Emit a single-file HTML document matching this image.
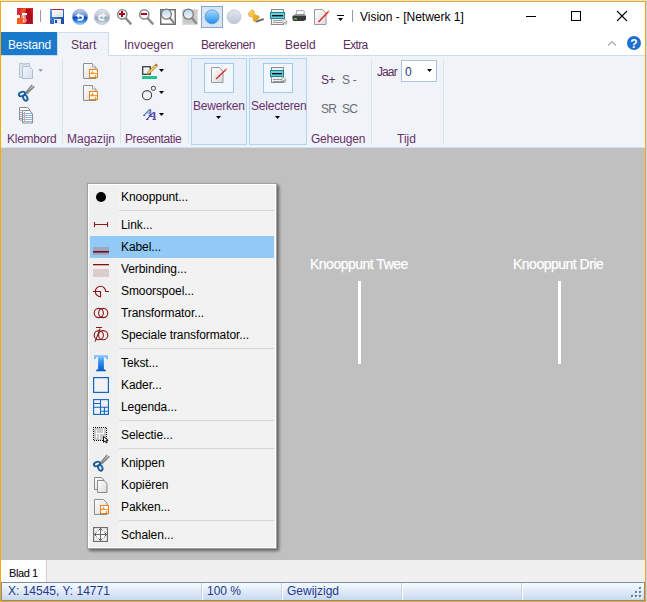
<!DOCTYPE html>
<html><head><meta charset="utf-8">
<style>
*{margin:0;padding:0;box-sizing:border-box}
html,body{width:647px;height:602px;overflow:hidden;background:#fff}
body{position:relative;font-family:"Liberation Sans",sans-serif;font-size:12px;color:#000}
.a{position:absolute}
.t{position:absolute;white-space:nowrap;line-height:12px}
.tab{color:#5e2d5e}
.grp{color:#6a3068}
.sep{position:absolute;width:1px;background:#dde3ea}
.mi{position:absolute;left:121px;white-space:nowrap;line-height:12px;color:#000;letter-spacing:-0.08px}
.ms{position:absolute;left:119px;width:155px;height:1px;background:#d7d7d7}
svg{position:absolute;left:0;top:0}
</style></head><body>
<!-- frame -->
<div class="a" style="left:0;top:0;width:647px;height:1px;background:#dbe3f0"></div>
<div class="a" style="left:646px;top:0;width:1px;height:602px;background:#ccd4e3"></div>
<div class="a" style="left:1px;top:32px;width:644px;height:23px;background:#fff"></div>
<div class="a" style="left:1px;top:55px;width:644px;height:93px;background:#f0f4f9;border-top:1px solid #cfdcec"></div>
<div class="a" style="left:1px;top:147px;width:644px;height:1px;background:#d3e1f2"></div>
<div class="a" style="left:1px;top:148px;width:644px;height:412px;background:#c0c0c0"></div>
<div class="a" style="left:1px;top:560px;width:644px;height:22px;background:#f0f0f0"></div>
<div class="a" style="left:1px;top:582px;width:644px;height:19px;background:linear-gradient(#f8fbff,#c7d9f0);border:1px solid #7890b0"></div>
<div class="a" style="left:0;top:1px;width:1px;height:601px;background:#f7ab00"></div>
<div class="a" style="left:0;top:1px;width:646px;height:1px;background:#f7ab00"></div>
<div class="a" style="left:645px;top:1px;width:1px;height:601px;background:#f7ab00"></div>
<div class="a" style="left:0;top:601px;width:646px;height:1px;background:#f7ab00"></div>

<!-- title -->
<div class="t" style="left:360px;top:11px;color:#000">Vision - [Netwerk 1]</div>

<!-- tabs -->
<div class="a" style="left:1px;top:32px;width:56px;height:23px;background:#1979ca"></div>
<div class="t" style="left:8px;top:39px;color:#fff;letter-spacing:-0.15px">Bestand</div>
<div class="a" style="left:57px;top:32px;width:52px;height:24px;background:#f0f4f9;border:1px solid #cfdcec;border-bottom:none"></div>
<div class="t tab" style="left:71px;top:39px">Start</div>
<div class="t tab" style="left:124px;top:39px">Invoegen</div>
<div class="t tab" style="left:201px;top:39px;letter-spacing:-0.45px">Berekenen</div>
<div class="t tab" style="left:285px;top:39px">Beeld</div>
<div class="t tab" style="left:343px;top:39px;letter-spacing:-0.7px">Extra</div>

<!-- ribbon big buttons -->
<div class="a" style="left:191px;top:58px;width:56px;height:87px;background:#e9f0fa;border:1px solid #acd5f8"></div>
<div class="a" style="left:249px;top:58px;width:58px;height:87px;background:#e9f0fa;border:1px solid #acd5f8"></div>
<div class="a" style="left:204px;top:63px;width:30px;height:30px;background:#f2f7fd;border:1px solid #9ccbf5"></div>
<div class="a" style="left:263px;top:63px;width:30px;height:30px;background:#f2f7fd;border:1px solid #9ccbf5"></div>
<div class="t grp" style="left:193px;top:100px;letter-spacing:-0.2px">Bewerken</div>
<div class="t grp" style="left:251px;top:100px;letter-spacing:-0.2px">Selecteren</div>

<!-- geheugen / tijd -->
<div class="t" style="left:321px;top:74px;color:#5e2d5e;letter-spacing:-0.6px">S+</div>
<div class="t" style="left:342px;top:74px;color:#6d6d6d;letter-spacing:-0.3px">S -</div>
<div class="t" style="left:321px;top:103px;color:#6d6d6d;letter-spacing:-0.8px">SR</div>
<div class="t" style="left:342px;top:103px;color:#6d6d6d;letter-spacing:-0.8px">SC</div>
<div class="t" style="left:377px;top:66px;color:#5e2d5e;letter-spacing:-0.9px">Jaar</div>
<div class="a" style="left:401px;top:60px;width:36px;height:22px;background:#fff;border:1px solid #a8c4e6"></div>
<div class="t" style="left:405px;top:66px;color:#1e3a8e;letter-spacing:-0.5px">0</div>

<!-- group labels -->
<div class="t grp" style="left:7px;top:133px;letter-spacing:-0.25px">Klembord</div>
<div class="t grp" style="left:67px;top:133px">Magazijn</div>
<div class="t grp" style="left:125px;top:133px;letter-spacing:-0.4px">Presentatie</div>
<div class="t grp" style="left:311px;top:133px;letter-spacing:-0.25px">Geheugen</div>
<div class="t grp" style="left:397px;top:133px">Tijd</div>
<div class="sep" style="left:62px;top:59px;height:85px"></div>
<div class="sep" style="left:120px;top:59px;height:85px"></div>
<div class="sep" style="left:188px;top:59px;height:85px"></div>
<div class="sep" style="left:371px;top:59px;height:85px"></div>
<div class="sep" style="left:443px;top:59px;height:85px"></div>

<!-- canvas labels -->
<div class="t" style="left:310px;top:258px;color:#fff;font-size:14px;letter-spacing:-0.5px;-webkit-text-stroke:0.25px #fff">Knooppunt Twee</div>
<div class="t" style="left:513px;top:258px;color:#fff;font-size:14px;letter-spacing:-0.5px;-webkit-text-stroke:0.25px #fff">Knooppunt Drie</div>
<div class="a" style="left:358px;top:281px;width:3px;height:83px;background:#fff"></div>
<div class="a" style="left:558px;top:281px;width:3px;height:83px;background:#fff"></div>

<!-- context menu -->
<div class="a" style="left:87px;top:183px;width:190px;height:366px;background:#f0f0f0;border:1px solid #a0a0a0;box-shadow:inset 1px 1px #fff,inset -1px -1px #fff,2px 2px 3px rgba(0,0,0,.5)"></div>
<div class="a" style="left:118px;top:185px;width:157px;height:362px;background:#f2f2f2"></div>
<div class="a" style="left:90px;top:236px;width:184px;height:22px;background:#91c9f7"></div>
<div class="mi" style="top:191px">Knooppunt...</div>
<div class="ms" style="top:210px"></div>
<div class="mi" style="top:219px">Link...</div>
<div class="mi" style="top:241px">Kabel...</div>
<div class="mi" style="top:263px">Verbinding...</div>
<div class="mi" style="top:285px">Smoorspoel...</div>
<div class="mi" style="top:307px">Transformator...</div>
<div class="mi" style="top:329px">Speciale transformator...</div>
<div class="ms" style="top:348px"></div>
<div class="mi" style="top:357px">Tekst...</div>
<div class="mi" style="top:379px">Kader...</div>
<div class="mi" style="top:401px">Legenda...</div>
<div class="ms" style="top:420px"></div>
<div class="mi" style="top:429px">Selectie...</div>
<div class="ms" style="top:448px"></div>
<div class="mi" style="top:457px">Knippen</div>
<div class="mi" style="top:479px">Kopiëren</div>
<div class="mi" style="top:501px">Pakken...</div>
<div class="ms" style="top:520px"></div>
<div class="mi" style="top:529px">Schalen...</div>

<!-- sheet tab -->
<div class="a" style="left:1px;top:560px;width:46px;height:22px;background:#fff;border-right:1px solid #d0d0d0"></div>
<div class="t" style="left:9px;top:567px;font-size:11px;letter-spacing:-0.4px">Blad 1</div>

<!-- status -->
<div class="t" style="left:8px;top:585px;color:#25388c">X: 14545, Y: 14771</div>
<div class="t" style="left:207px;top:585px;color:#25388c">100 %</div>
<div class="t" style="left:287px;top:585px;color:#25388c">Gewijzigd</div>
<div class="a" style="left:201px;top:583px;width:1px;height:17px;background:#c3d3ea;border-right:1px solid #fff;width:2px"></div>
<div class="a" style="left:281px;top:583px;width:2px;height:17px;background:#c3d3ea;border-right:1px solid #fff"></div>
<div class="a" style="left:401px;top:583px;width:2px;height:17px;background:#c3d3ea;border-right:1px solid #fff"></div>
<div class="a" style="left:521px;top:583px;width:2px;height:17px;background:#c3d3ea;border-right:1px solid #fff"></div>

<!-- ICONS -->
<svg width="647" height="602" viewBox="0 0 647 602">
<defs>
<linearGradient id="gSph" x1="0" y1="0" x2="0" y2="1"><stop offset="0" stop-color="#c9d6f0"/><stop offset=".45" stop-color="#5b8ad6"/><stop offset=".52" stop-color="#0a3fb2"/><stop offset=".8" stop-color="#2f8ff0"/><stop offset="1" stop-color="#a8e4ff"/></linearGradient>
<linearGradient id="gSphG" x1="0" y1="0" x2="0" y2="1"><stop offset="0" stop-color="#dfe4ec"/><stop offset=".45" stop-color="#bcc6d6"/><stop offset=".52" stop-color="#98a6bc"/><stop offset=".8" stop-color="#b4c0d2"/><stop offset="1" stop-color="#dde6f0"/></linearGradient>
<linearGradient id="gLens" x1="0" y1="0" x2="0" y2="1"><stop offset="0" stop-color="#b9d3f1"/><stop offset="1" stop-color="#f4f9ff"/></linearGradient>
<linearGradient id="gBall" x1="0" y1="0" x2="0" y2="1"><stop offset="0" stop-color="#a8dcff"/><stop offset=".6" stop-color="#55adf5"/><stop offset="1" stop-color="#2a8be8"/></linearGradient>
<linearGradient id="gBallG" x1="0" y1="0" x2="0" y2="1"><stop offset="0" stop-color="#e2e7ef"/><stop offset="1" stop-color="#bcc5d4"/></linearGradient>
<linearGradient id="gSave" x1="0" y1="0" x2="1" y2="1"><stop offset="0" stop-color="#5a9be6"/><stop offset="1" stop-color="#1446a0"/></linearGradient>
<linearGradient id="gPage" x1="0" y1="0" x2="1" y2="1"><stop offset="0" stop-color="#ffffff"/><stop offset="1" stop-color="#dcdcdc"/></linearGradient>
<linearGradient id="gPin" x1="0" y1="0" x2="1" y2="1"><stop offset="0" stop-color="#ffe27a"/><stop offset="1" stop-color="#e08a00"/></linearGradient>
</defs>
<!-- app icon -->
<rect x="17" y="8" width="16" height="16" fill="#e0202a"/>
<rect x="17" y="8" width="6" height="7" fill="#d82a40"/>
<path d="M21 10l2-2h3l1 2-1 3h-5z" fill="#f4501e"/>
<path d="M26 9h5l1 3v9l-1 3h-5l-1-4 1-3-1-4z" fill="#a80e1c"/>
<rect x="31" y="8" width="2" height="6" fill="#e01414"/>
<rect x="22" y="13" width="5" height="2" fill="#fff"/>
<path d="M21 15h5v3l1 3-2 2h-3l1-3-2-2z" fill="#f08a80"/>
<rect x="23" y="15" width="1" height="3" fill="#f6d0cc"/>
<rect x="22" y="20" width="2" height="2" fill="#f8d8d0"/>
<rect x="17" y="15" width="3" height="3" fill="#fff"/>
<path d="M17 18h5l1 2v4h-6z" fill="#ff5a14"/>
<path d="M26 22h7v2h-7z" fill="#b01030"/>
<!-- sep -->
<rect x="40" y="10" width="1" height="12" fill="#9a9a9a"/>
<!-- save -->
<rect x="50" y="9" width="14" height="15" fill="url(#gSave)"/>
<rect x="52" y="9" width="11" height="1" fill="#c0182e"/>
<rect x="52" y="10" width="11" height="7" fill="url(#gPage)"/>
<rect x="54" y="19" width="7" height="5" fill="#e8e8e8"/>
<rect x="55" y="20" width="2" height="3" fill="#1a4fa8"/>
<!-- undo -->
<circle cx="80" cy="16.9" r="7.7" fill="url(#gSph)" stroke="#8a9cc0" stroke-width=".6"/>
<path d="M76 15.6l3.2-3.1v2h1.6a3.1 3.1 0 0 1 0 6.2h-3.2v-1.9h3.2a1.2 1.2 0 0 0 0-2.4h-1.6v2.2z" fill="#fff"/>
<!-- redo -->
<circle cx="102" cy="16.9" r="7.7" fill="url(#gSphG)" stroke="#b0bacb" stroke-width=".6"/>
<path d="M106 15.6l-3.2-3.1v2h-1.6a3.1 3.1 0 0 0 0 6.2h3.2v-1.9h-3.2a1.2 1.2 0 0 1 0-2.4h1.6v2.2z" fill="#f4f6fa"/>
<!-- zoom in -->
<line x1="125.5" y1="18" x2="130.5" y2="23.5" stroke="#8a8a8a" stroke-width="2.6" stroke-linecap="round"/>
<circle cx="122.3" cy="14.4" r="4.6" fill="#eef7ff" stroke="#8a8a8a" stroke-width="1.5"/>
<rect x="119" y="13" width="6" height="2" fill="#b00012"/>
<rect x="121" y="11" width="2" height="6" fill="#b00012"/>
<!-- zoom out -->
<line x1="147.5" y1="18" x2="152.5" y2="23.5" stroke="#8a8a8a" stroke-width="2.6" stroke-linecap="round"/>
<circle cx="144.3" cy="14.4" r="4.6" fill="#eef7ff" stroke="#8a8a8a" stroke-width="1.5"/>
<rect x="141" y="13" width="6" height="2" fill="#b00012"/>
<!-- zoom rect -->
<rect x="160.75" y="9.75" width="14.5" height="14.5" fill="#fff" stroke="#727272" stroke-width="1.5"/>
<line x1="170" y1="18" x2="174" y2="23" stroke="#8a8a8a" stroke-width="2.2" stroke-linecap="round"/>
<circle cx="166.4" cy="14.2" r="5" fill="url(#gLens)" stroke="#777" stroke-width="1.2"/>
<!-- zoom all -->
<rect x="182" y="9" width="16" height="16" fill="#c9c9c9"/>
<rect x="182.75" y="9.75" width="14.5" height="14.5" fill="none" stroke="#f4f4f4" stroke-width="1.2" stroke-dasharray="1.2 1.2"/>
<line x1="192" y1="18" x2="196" y2="23" stroke="#8a8a8a" stroke-width="2.2" stroke-linecap="round"/>
<circle cx="188.3" cy="14.2" r="5" fill="url(#gLens)" stroke="#777" stroke-width="1.2"/>
<!-- pressed btn -->
<rect x="201.5" y="6.5" width="21" height="21" fill="#dae5f3" stroke="#86a6d2"/>
<circle cx="212" cy="16.8" r="7" fill="url(#gBall)" stroke="#4f8fd0" stroke-width=".7"/>
<!-- gray ball -->
<circle cx="234" cy="16.8" r="7" fill="url(#gBallG)" stroke="#b8c2d2" stroke-width=".7"/>
<!-- pin -->
<path d="M256.5 21.5l6.5-2.2" stroke="#707070" stroke-width="2" stroke-linecap="round"/>
<path d="M248.3 13.2l3.6-3.6 2.6 2-.7 1.5 2.6 2.6 1.5-.3 1.7 1.7-4.8 4.8-1.7-1.7.3-1.5-2.6-2.6-1.5.7z" fill="url(#gPin)" stroke="#d8900c" stroke-width=".6"/>
<!-- select -->
<rect x="271.5" y="9.5" width="12" height="15" fill="#f2f2f2" stroke="#8a8a8a"/>
<rect x="273" y="20" width="9" height="1" fill="#9a9a9a"/>
<rect x="273" y="22" width="9" height="1" fill="#9a9a9a"/>
<rect x="270.5" y="12.5" width="14" height="6" fill="#62d0dc" stroke="#1b8494"/>
<rect x="272" y="15" width="11" height="1.4" fill="#101010"/>
<path d="M283 18v6l1.5-1.5 1.2 2 .8-.5-1.2-2h2z" fill="#fff" stroke="#707070" stroke-width=".6"/>
<!-- printer -->
<path d="M296.5 10.5h6.5l1.5 1-1 4h-7.5z" fill="#fafafa" stroke="#8a8a8a" stroke-width=".7"/>
<path d="M292.5 16l3-1.5h9l1.5 1.5v3.5l-2 1.5h-10.5l-1-1.5z" fill="#3a3a3a"/>
<path d="M293 16l2.5-1.2h9l1.2 1.2z" fill="#8a8a8a"/>
<rect x="294" y="18" width="3" height="1.6" fill="#3cc83c"/>
<!-- pen page -->
<path d="M314.5 9.5h8l3.5 3.5v11.5h-11.5z" fill="url(#gPage)" stroke="#9a9a9a"/>
<line x1="318.5" y1="22" x2="328.5" y2="11.5" stroke="#e02a2a" stroke-width="1.5"/>
<line x1="328" y1="12" x2="329.5" y2="10.5" stroke="#e8a060" stroke-width="1.5"/>
<!-- qat arrow -->
<rect x="337" y="15" width="7" height="1" fill="#000"/>
<path d="M338 18h5l-2.5 3z" fill="#000"/>
<rect x="352" y="10" width="1" height="12" fill="#9a9a9a"/>
<!-- window controls -->
<rect x="526" y="16" width="10" height="1" fill="#000"/>
<rect x="571.5" y="11.5" width="9" height="9" fill="none" stroke="#000"/>
<path d="M617 11l10 10M627 11l-10 10" stroke="#000" stroke-width="1.1"/>
<!-- ribbon minimize chevron & help -->
<path d="M608 45.5l4-4 4 4" fill="none" stroke="#a9a9a9" stroke-width="1.2"/>
<circle cx="634" cy="43" r="7" fill="#1f6fcf"/>
<text x="634" y="47.5" font-family="Liberation Sans" font-weight="bold" font-size="12" fill="#fff" text-anchor="middle">?</text>
<defs>
<linearGradient id="gPaste" x1="0" y1="0" x2="1" y2="1"><stop offset="0" stop-color="#f2f6fb"/><stop offset="1" stop-color="#d5e0ee"/></linearGradient>
<linearGradient id="gPg2" x1="0" y1="0" x2="1" y2="1"><stop offset="0" stop-color="#ffffff"/><stop offset="1" stop-color="#d8d8d8"/></linearGradient>
<linearGradient id="gT" x1="0" y1="0" x2="0" y2="1"><stop offset="0" stop-color="#9fd0ff"/><stop offset=".35" stop-color="#3a9af5"/><stop offset="1" stop-color="#0058c8"/></linearGradient>
</defs>
<!-- Klembord: paste disabled -->
<path d="M19.5 63.5h10v14h-10z" fill="#dce5f0" stroke="#b3c1d4"/>
<rect x="22" y="63" width="5" height="2" fill="#c5d0de"/>
<path d="M22.5 66.5h7l3 3v9h-10z" fill="url(#gPaste)" stroke="#aebdd2"/>
<path d="M38 69h5l-2.5 3z" fill="#a6a6a6"/>
<!-- scissors -->
<g id="sciss"><path d="M25.8 92.8l6-7.3M26.8 93.6l7-6.8" stroke="#8a8a8a" stroke-width="1.7" stroke-linecap="round"/>
<ellipse cx="22" cy="94" rx="3.2" ry="2.1" transform="rotate(-20 22 94)" fill="none" stroke="#1b5e9c" stroke-width="1.9"/>
<ellipse cx="25.3" cy="97.8" rx="2" ry="3" transform="rotate(-25 25.3 97.8)" fill="none" stroke="#1b5e9c" stroke-width="1.9"/></g>
<!-- copy -->
<path d="M19.5 107.5h8l2.5 2.5v10h-10.5z" fill="#fff" stroke="#8c8c8c"/>
<path d="M22.5 110.5h7l3 3v9.5h-10z" fill="#fff" stroke="#8c8c8c"/>
<g fill="#8fb4e0"><rect x="23" y="113" width="9" height="1"/><rect x="23" y="115" width="9" height="1"/><rect x="23" y="117" width="9" height="1"/><rect x="23" y="119" width="9" height="1"/><rect x="23" y="121" width="9" height="1"/>
<rect x="20" y="110" width="2" height="1"/><rect x="20" y="112" width="2" height="1"/><rect x="20" y="114" width="2" height="1"/><rect x="20" y="116" width="2" height="1"/><rect x="20" y="118" width="2" height="1"/></g>
<rect x="24" y="112" width="1" height="10" fill="#e0a090"/>
<!-- Magazijn -->
<g id="mag1">
<path d="M83.5 63.5h9l3.5 3.5v11.5h-12.5z" fill="url(#gPg2)" stroke="#8e8e8e"/>
<path d="M92.5 63.5v3.5h3.5" fill="#fff" stroke="#a0a0a0"/>
<rect x="89.5" y="69.5" width="8" height="8" fill="#fff" stroke="#e8801c"/>
<path d="M91 73l1.5-2.5 1.5 2.5z" fill="#f0a030"/>
<rect x="90" y="73" width="7" height="1.2" fill="#f0a030"/>
<circle cx="95.5" cy="76" r="1" fill="#f0a030"/>
</g>
<use href="#mag1" y="22"/>
<!-- Presentatie -->
<rect x="142.7" y="66.7" width="7.6" height="7.6" fill="none" stroke="#3e3e3e" stroke-width="1.3"/>
<path d="M147 74.5l1-2.8 7-7 1.8 1.8-7 7z" fill="#f3c54a" stroke="#7a6a3a" stroke-width=".6"/>
<path d="M155 64.7l1.2-1.2 1.8 1.8-1.2 1.2z" fill="#e05a40"/>
<rect x="142" y="76" width="15" height="3" fill="#1fc68c"/>
<path d="M159 69h5l-2.5 3z" fill="#000"/>
<circle cx="147" cy="95.2" r="4.6" fill="none" stroke="#404040" stroke-width="1.1"/>
<circle cx="153.4" cy="88.3" r="2.1" fill="none" stroke="#404040" stroke-width="1"/>
<path d="M159 91h5l-2.5 3z" fill="#000"/>
<g stroke="#5a78b8" fill="none"><path d="M143.8 115.3l6-6.1" stroke-width="1.1"/><path d="M150.3 109.2v6.3" stroke-width="1.9"/><path d="M146.5 113h3" stroke-width="1"/><path d="M143 115.5h2.5M148.5 115.5h3" stroke-width="1"/></g>
<g stroke="#5548a8" fill="none"><path d="M146.8 119.3l7-7.2" stroke-width="1.1"/><path d="M154.4 112.1v7.3" stroke-width="1.9"/><path d="M150 116.5h3.5" stroke-width="1"/><path d="M146 119.5h2.5M152.5 119.5h3.5" stroke-width="1"/></g>
<path d="M159 113h5l-2.5 3z" fill="#000"/>
<!-- Bewerken icon -->
<path d="M211.5 67.5h8l3.5 3.5v11.5h-11.5z" fill="url(#gPg2)" stroke="#9a9a9a"/>
<line x1="216" y1="79" x2="226" y2="69.5" stroke="#e02a2a" stroke-width="1.4"/>
<line x1="225.5" y1="70" x2="227" y2="68.5" stroke="#e8a060" stroke-width="1.4"/>
<!-- Selecteren icon -->
<rect x="271.5" y="67.5" width="12" height="15" fill="#f0f0f0" stroke="#8a8a8a"/>
<rect x="273" y="79" width="9" height="1" fill="#9a9a9a"/>
<rect x="273" y="81" width="9" height="1" fill="#9a9a9a"/>
<rect x="270.5" y="70.5" width="13" height="6" fill="#62d0dc" stroke="#1b8494"/>
<rect x="272" y="73" width="10" height="1.4" fill="#101010"/>
<path d="M282 76v6l1.5-1.5 1.2 2 .8-.5-1.2-2h2z" fill="#fff" stroke="#707070" stroke-width=".6"/>
<path d="M216 116h5l-2.5 3z" fill="#000"/>
<path d="M275 116h5l-2.5 3z" fill="#000"/>
<!-- combo arrow -->
<path d="M427 69h5l-2.5 3z" fill="#000"/>
<!-- grip -->
<path d="M640 588h2v2h-2zM636 592h2v2h-2zM640 592h2v2h-2zM632 596h2v2h-2zM636 596h2v2h-2zM640 596h2v2h-2z" fill="#fff"/>
<path d="M639 587h2v2h-2zM635 591h2v2h-2zM639 591h2v2h-2zM631 595h2v2h-2zM635 595h2v2h-2zM639 595h2v2h-2z" fill="#62809c"/>
<!-- menu icons -->
<circle cx="101" cy="197" r="5" fill="#000"/>
<path d="M94 224.5h14M94.5 222v5M107.5 222v5" stroke="#8b1c1c" stroke-width="1.1"/>
<rect x="93" y="247" width="16" height="8" fill="#9aa6c4"/>
<rect x="93" y="251" width="16" height="1.6" fill="#7a0c10"/>
<rect x="93" y="264" width="16" height="1.3" fill="#8b1010"/>
<rect x="93" y="269" width="16" height="8" fill="#ddcccc"/>
<path d="M93 291.5H100.5V296.7A5.2 5.2 0 1 1 105.7 291.5H109" fill="none" stroke="#8b1010" stroke-width="1.1"/>
<circle cx="98.8" cy="313" r="4.6" fill="none" stroke="#8b1414" stroke-width="1.1"/>
<circle cx="103.2" cy="313" r="4.6" fill="none" stroke="#8b1414" stroke-width="1.1"/>
<circle cx="98.8" cy="335.2" r="4.6" fill="none" stroke="#8b1414" stroke-width="1.1"/>
<circle cx="103.2" cy="335.2" r="4.6" fill="none" stroke="#8b1414" stroke-width="1.1"/>
<path d="M96 327.5h6M95.2 341.6l4.8-13" stroke="#8b1414" stroke-width="1.1"/>
<!-- T -->
<path d="M94 355h14v4.2l-1.3-.2-.8-1.8h-2v12l2 .8v1.2h-9.8v-1.2l2-.8v-12h-2l-.8 1.8-1.3.2z" fill="url(#gT)"/>
<!-- Kader -->
<rect x="93.6" y="377.6" width="14.8" height="14.8" fill="#f2f2f2" stroke="#0a66cc" stroke-width="1.2"/>
<!-- Legenda -->
<g fill="none" stroke="#0a66cc" stroke-width="1.1">
<rect x="93.6" y="399.6" width="14.8" height="14.8" fill="#f2f2f2"/>
<path d="M100.5 399.6v14.8M93.6 407.3h14.8M93.6 403.5h6.9M104.4 407.3v7.1M100.5 411.2h7.9"/>
</g>
<!-- Selectie -->
<rect x="94" y="428" width="12" height="12" fill="#c9c9c9"/>
<path d="M96 430h1v8h-1zM96 433h8v1h-8zM99 433h1v6h-1zM103 428h1v6h-1z" fill="#fff"/>
<path d="M93 427h1v1h-1zM95 427h1v1h-1zM97 427h1v1h-1zM99 427h1v1h-1zM101 427h1v1h-1zM103 427h1v1h-1zM105 427h1v1h-1zM93 429h1v1h-1zM93 431h1v1h-1zM93 433h1v1h-1zM93 435h1v1h-1zM93 437h1v1h-1zM93 439h1v1h-1zM106 428h1v1h-1zM106 430h1v1h-1zM106 432h1v1h-1zM106 434h1v1h-1zM106 436h1v1h-1zM106 438h1v1h-1zM94 440h1v1h-1zM96 440h1v1h-1zM98 440h1v1h-1zM100 440h1v1h-1zM102 440h1v1h-1z" fill="#000"/>
<path d="M103.5 436.5v5.8l1.5-1.4 1.2 2.1 1.1-.6-1.2-2h2.1z" fill="#fff" stroke="#000" stroke-width=".9"/>
<!-- Knippen -->
<use href="#sciss" x="75" y="370"/>
<!-- Kopieren -->
<path d="M94.5 477.5h7l2.5 2.5v9.5h-9.5z" fill="url(#gPg2)" stroke="#8a8a8a"/>
<path d="M97.5 480.5h6.5l3 3v9h-9.5z" fill="url(#gPg2)" stroke="#8a8a8a"/>
<!-- Pakken -->
<path d="M94.5 499.5h9l3.5 3.5v11.5h-12.5z" fill="url(#gPg2)" stroke="#8e8e8e"/>
<rect x="100.5" y="505.5" width="8" height="8" fill="#fff" stroke="#e8801c"/>
<path d="M102 509l1.5-2.5 1.5 2.5z" fill="#f0a030"/>
<rect x="101" y="509" width="7" height="1.2" fill="#f0a030"/>
<circle cx="106.5" cy="512" r="1" fill="#f0a030"/>
<!-- Schalen -->
<rect x="93.6" y="527.6" width="13.8" height="13.8" fill="#fafafa" stroke="#6e6e6e" stroke-width="1.2"/>
<path d="M100.5 528v13M94 534.5h13" stroke="#6a6a6a" stroke-width="1"/>
<path d="M98.5 530.5l2-2 2 2M98.5 538.5l2 2 2-2M96.5 532.5l-2 2 2 2M104.5 532.5l2 2-2 2" fill="none" stroke="#555" stroke-width="1"/>
<path d="M97.5 530l-2 2M103.5 530l2 2M97.5 539l-2-2M103.5 539l2-2" stroke="#aaa" stroke-width=".8"/>
</svg>
</body></html>
